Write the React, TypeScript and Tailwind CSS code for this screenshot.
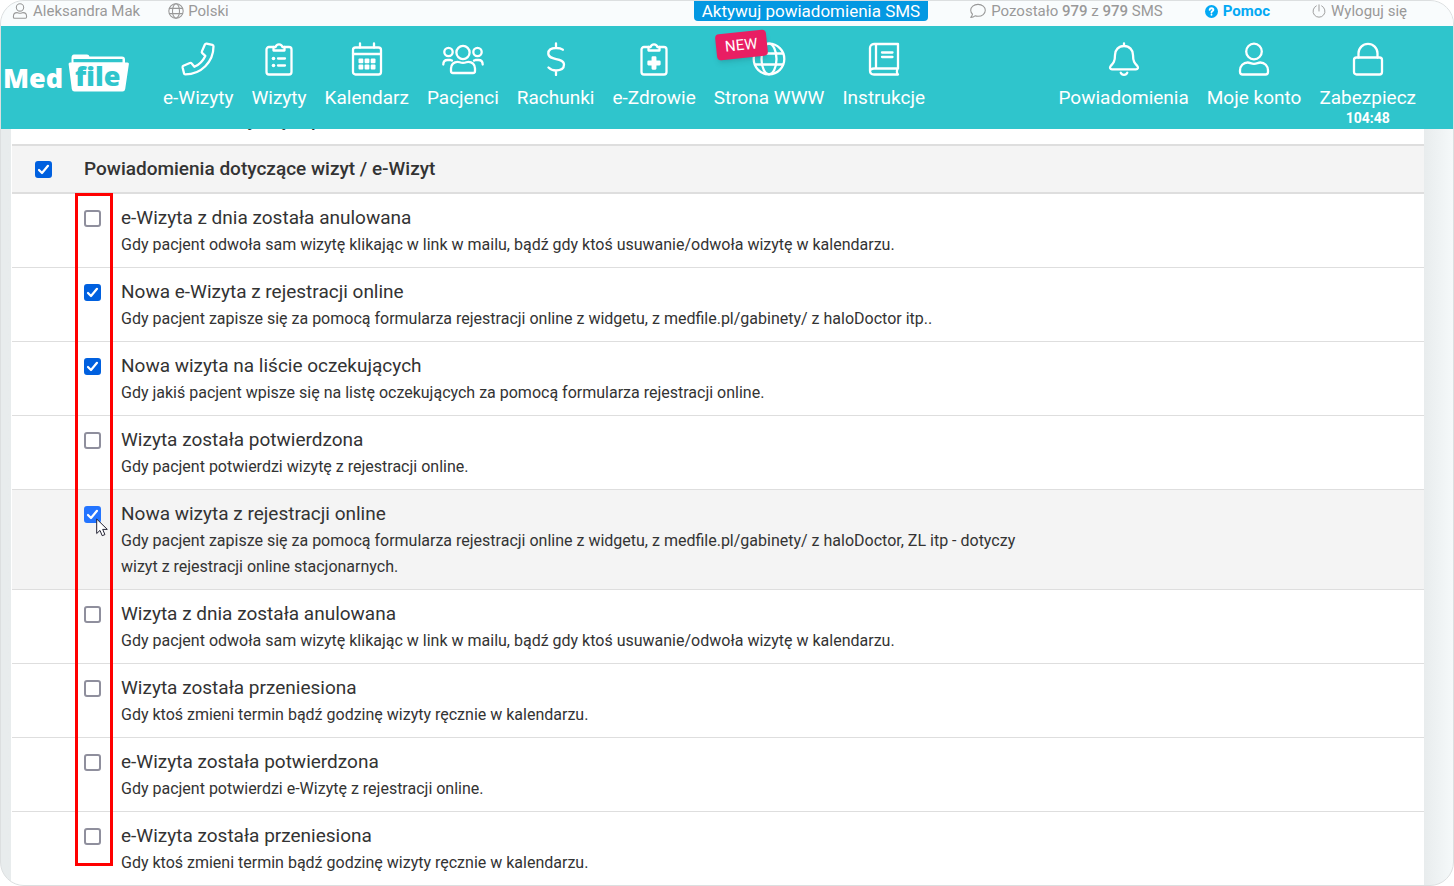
import React from "react";
import clsx from "clsx";

type IconProps = { className?: string; children: React.ReactNode; box?: string };

const Icon = ({ className = "size-[34px]", children, box = "0 0 34 34" }: IconProps) => (
  <svg
    viewBox={box}
    className={className}
    fill="none"
    stroke="currentColor"
    strokeWidth="2.3"
    strokeLinecap="round"
    strokeLinejoin="round"
    aria-hidden="true"
  >
    {children}
  </svg>
);

const PhoneIcon = () => (
  <Icon>
    <path d="M25.6 1.6 31.4 2.9C32.1 3.1 32.5 3.6 32.5 4.3 32.5 20 20 32.4 4.4 32.4 3.7 32.4 3.1 32 3 31.3L1.6 25.4C1.5 24.7 1.8 24.1 2.4 23.8L8.9 21C9.5 20.8 10.2 20.9 10.6 21.4L13.4 24.8C18.1 22.6 22.1 18.6 24.3 13.9L21.3 11.2C20.8 10.7 20.6 10 20.9 9.4L23.9 2.5C24.2 1.8 24.9 1.5 25.6 1.6Z" />
  </Icon>
);

const ClipboardIcon = () => (
  <Icon>
    <path d="M11.5 5H7A2.5 2.5 0 0 0 4.5 7.5V30A2.5 2.5 0 0 0 7 32.5H27A2.5 2.5 0 0 0 29.5 30V7.5A2.5 2.5 0 0 0 27 5H22.5" />
    <path d="M11.5 5H13.6A3.5 3.5 0 0 1 20.4 5H22.5V8.5H11.5Z" />
    <path d="M16 16.5H23M16 23.5H23" />
    <circle cx="11.5" cy="16.5" r="1.8" fill="currentColor" stroke="none" />
    <circle cx="11.5" cy="23.5" r="1.8" fill="currentColor" stroke="none" />
  </Icon>
);

const CalendarIcon = () => (
  <Icon>
    <rect x="3" y="5.5" width="28" height="27" rx="2.5" />
    <path d="M3 12H31M10 1.5V5.5M24 1.5V5.5" />
    <g fill="currentColor" stroke="none">
      <rect x="8.5" y="16.5" width="4.8" height="4.8" rx="1" />
      <rect x="14.6" y="16.5" width="4.8" height="4.8" rx="1" />
      <rect x="20.7" y="16.5" width="4.8" height="4.8" rx="1" />
      <rect x="8.5" y="22.6" width="4.8" height="4.8" rx="1" />
      <rect x="14.6" y="22.6" width="4.8" height="4.8" rx="1" />
      <rect x="20.7" y="22.6" width="4.8" height="4.8" rx="1" />
    </g>
  </Icon>
);

const UsersIcon = () => (
  <Icon className="h-[34px] w-[42px]" box="0 0 42 34">
    <circle cx="21" cy="10.5" r="6.6" />
    <circle cx="6.5" cy="10" r="4.2" />
    <circle cx="35.5" cy="10" r="4.2" />
    <path d="M9 29V26.5C9 22.5 12 19.8 15.5 19.8 17.5 19.8 18 20.8 21 20.8S24.5 19.8 26.5 19.8C30 19.8 33 22.5 33 26.5V29C33 30.4 32 31 31 31H11C10 31 9 30.4 9 29Z" />
    <path d="M1.3 22.5C1.3 19.5 3 18 5.5 18H8.5L10 18.6M40.7 22.5C40.7 19.5 39 18 36.5 18H33.5L32 18.6" />
  </Icon>
);

const DollarIcon = () => (
  <Icon>
    <path d="M17 1.5V6M17 28.5V33M23.8 7.7C22 6.3 19.7 6 17 6 12.5 6 9.3 8 9.3 11.6 9.3 19.3 25 14.8 25 22.6 25 26.6 21.7 28.5 17 28.5 13.8 28.5 11.5 27.5 9.5 25.5" />
  </Icon>
);

const HealthIcon = () => (
  <Icon>
    <path d="M11.5 5H7A2.5 2.5 0 0 0 4.5 7.5V30A2.5 2.5 0 0 0 7 32.5H27A2.5 2.5 0 0 0 29.5 30V7.5A2.5 2.5 0 0 0 27 5H22.5" />
    <path d="M11.5 5H13.6A3.5 3.5 0 0 1 20.4 5H22.5V8.5H11.5Z" />
    <path
      d="M15.7 15.5H18.3V19.7H22.5V22.3H18.3V26.5H15.7V22.3H11.5V19.7H15.7Z"
      fill="currentColor"
    />
  </Icon>
);

const GlobeIcon = ({ className }: { className?: string }) => (
  <Icon className={className}>
    <circle cx="17" cy="17" r="15.3" />
    <ellipse cx="17" cy="17" rx="7.5" ry="15.3" />
    <path d="M3 11.5H31M3 22.5H31" />
  </Icon>
);

const BookIcon = () => (
  <Icon>
    <path d="M31 2H7C4.5 2 3 3.8 3 6V28.5C3 31 4.8 32.5 7 32.5H31C29.5 31 29.5 28 31 26.5M31 2V26.5H7C4.7 26.5 3 27.5 3 29.5M9 2V26.5M15 10.5H25.5M15 15H25.5" />
  </Icon>
);

const BellIcon = () => (
  <Icon>
    <path d="M17 1.5V4M17 4C11.5 4 8 8 8 13 8 20 6 21.5 3.7 24 2.3 25.6 3.2 27.3 5 27.3H29C30.8 27.3 31.7 25.6 30.3 24 28 21.5 26 20 26 13 26 8 22.5 4 17 4ZM13.7 30.7C14.2 32 15.3 32.8 17 32.8S19.8 32 20.3 30.7" />
  </Icon>
);

const UserIcon = ({ className }: { className?: string }) => (
  <Icon className={className}>
    <circle cx="17" cy="9.5" r="7.8" />
    <path d="M3 30V28.5C3 24 6.3 20.5 10.8 20.5 13 20.5 14 21.8 17 21.8S21 20.5 23.2 20.5C27.7 20.5 31 24 31 28.5V30C31 31.7 30 32.5 28.5 32.5H5.5C4 32.5 3 31.7 3 30Z" />
  </Icon>
);

const LockIcon = () => (
  <Icon>
    <rect x="3" y="15.5" width="28" height="17" rx="2.5" />
    <path d="M7.5 15.5V11.3A9.5 9.5 0 0 1 26.5 11.3V15.5" />
  </Icon>
);

const CommentIcon = () => (
  <Icon className="size-4">
    <path d="M17 3C8 3 1.5 8.5 1.5 15.5 1.5 18.7 3 21.6 5.3 23.8 4.8 26.5 3.4 28.6 1.6 30.6 5.5 30.7 8.8 29 10.7 27.3 12.7 28 14.8 28.3 17 28.3 26 28.3 32.5 22.6 32.5 15.5S26 3 17 3Z" />
  </Icon>
);

const PowerIcon = () => (
  <Icon className="size-[14px]">
    <path d="M17 2V17M10.5 4.5A14.5 14.5 0 1 0 23.5 4.5" />
  </Icon>
);

const HelpIcon = () => (
  <Icon className="size-[13px]" box="0 0 16 16">
    <circle cx="8" cy="8" r="8" fill="currentColor" stroke="none" />
    <path d="M5.7 6C5.9 4.7 6.8 4 8 4S10.3 4.8 10.3 6C10.3 7.5 8 7.5 8 9.2M8 12V12.1" stroke="#fff" />
  </Icon>
);

const Logo = () => (
  <a href="#" aria-label="Med file" className="shrink-0">
    <svg viewBox="0 0 128 48" className="h-12 w-[128px]" fontFamily='"Open Sans", sans-serif' fontWeight="800">
      <path d="M68.5 11V6Q68.5 2.500 71 2.500H84Q86 2.500 86.500 4.500H119Q122 4.500 122 7.500V11" fill="#fff" />
      <path d="M70.500 10.500V7H119.500V10.500Z" fill="#2fc5cc" />
      <path d="M67 10.500H124.500Q126.200 10.500 125.900 12L122.200 37Q121.800 39.500 119.500 39.500H71.500Q69.200 39.500 68.800 37L65.600 12Q65.500 10.500 67 10.500Z" fill="#fff" />
      <text x="0" y="36" fontSize="27" fill="#fff">Med</text>
      <text x="72" y="34" fontSize="27" fill="#2fc5cc">file</text>
    </svg>
  </a>
);

type NavItemProps = { label: string; icon: React.ReactNode; badge?: string; note?: string };

const NavItem = ({ label, icon, badge, note }: NavItemProps) => (
  <a href="#" className="relative flex flex-col items-center whitespace-nowrap text-[19px] leading-6 text-white">
    {icon}
    <span className="mt-2.5">{label}</span>
    {note && <strong className="text-sm leading-4">{note}</strong>}
    {badge && (
      <span className="absolute -top-2.5 left-0.5 -rotate-6 rounded bg-[#e91e63] px-[9px] text-[15px] leading-[26px] shadow-md">
        {badge}
      </span>
    )}
  </a>
);

const mainNav: NavItemProps[] = [
  { label: "e-Wizyty", icon: <PhoneIcon /> },
  { label: "Wizyty", icon: <ClipboardIcon /> },
  { label: "Kalendarz", icon: <CalendarIcon /> },
  { label: "Pacjenci", icon: <UsersIcon /> },
  { label: "Rachunki", icon: <DollarIcon /> },
  { label: "e-Zdrowie", icon: <HealthIcon /> },
  { label: "Strona WWW", icon: <GlobeIcon />, badge: "NEW" },
  { label: "Instrukcje", icon: <BookIcon /> },
];

const accountNav: NavItemProps[] = [
  { label: "Powiadomienia", icon: <BellIcon /> },
  { label: "Moje konto", icon: <UserIcon /> },
  { label: "Zabezpiecz", icon: <LockIcon />, note: "104:48" },
];

type Notification = { id: string; title: string; text: string; checked?: boolean; active?: boolean };

const notifications: Notification[] = [
  {
    id: "e-cancelled",
    title: "e-Wizyta z dnia została anulowana",
    text: "Gdy pacjent odwoła sam wizytę klikając w link w mailu, bądź gdy ktoś usuwanie/odwoła wizytę w kalendarzu.",
  },
  {
    id: "e-new",
    title: "Nowa e-Wizyta z rejestracji online",
    text: "Gdy pacjent zapisze się za pomocą formularza rejestracji online z widgetu, z medfile.pl/gabinety/ z haloDoctor itp..",
    checked: true,
  },
  {
    id: "waiting",
    title: "Nowa wizyta na liście oczekujących",
    text: "Gdy jakiś pacjent wpisze się na listę oczekujących za pomocą formularza rejestracji online.",
    checked: true,
  },
  {
    id: "confirmed",
    title: "Wizyta została potwierdzona",
    text: "Gdy pacjent potwierdzi wizytę z rejestracji online.",
  },
  {
    id: "new",
    title: "Nowa wizyta z rejestracji online",
    text: "Gdy pacjent zapisze się za pomocą formularza rejestracji online z widgetu, z medfile.pl/gabinety/ z haloDoctor, ZL itp - dotyczy wizyt z rejestracji online stacjonarnych.",
    checked: true,
    active: true,
  },
  {
    id: "cancelled",
    title: "Wizyta z dnia została anulowana",
    text: "Gdy pacjent odwoła sam wizytę klikając w link w mailu, bądź gdy ktoś usuwanie/odwoła wizytę w kalendarzu.",
  },
  {
    id: "moved",
    title: "Wizyta została przeniesiona",
    text: "Gdy ktoś zmieni termin bądź godzinę wizyty ręcznie w kalendarzu.",
  },
  {
    id: "e-confirmed",
    title: "e-Wizyta została potwierdzona",
    text: "Gdy pacjent potwierdzi e-Wizytę z rejestracji online.",
  },
  {
    id: "e-moved",
    title: "e-Wizyta została przeniesiona",
    text: "Gdy ktoś zmieni termin bądź godzinę wizyty ręcznie w kalendarzu.",
  },
];

const Checkbox = ({ id, checked, active }: { id: string; checked?: boolean; active?: boolean }) => (
  <span className="relative size-[17px] shrink-0">
    <input
      type="checkbox"
      id={id}
      defaultChecked={checked}
      className={clsx(
        "peer block size-full appearance-none rounded-[3px] border-2 border-[#8f8f9d] bg-white",
        active ? "checked:border-[#2374ff] checked:bg-[#2374ff]" : "checked:border-[#0060df] checked:bg-[#0060df]"
      )}
    />
    <svg
      viewBox="0 0 17 17"
      className="pointer-events-none absolute inset-0 hidden size-full peer-checked:block"
      fill="none"
      stroke="#fff"
      strokeWidth="2.2"
      strokeLinecap="round"
      strokeLinejoin="round"
    >
      <path d="M4 9 7 12 13 4.8" />
    </svg>
    {active && (
      <svg viewBox="0 0 12 19" className="pointer-events-none absolute left-3 top-3 h-[19px] w-3">
        <path d="M.7 1V15.5L4 12.4 6.2 17.7 8.9 16.6 6.7 11.4H11.3Z" fill="#fff" stroke="#222233" />
      </svg>
    )}
  </span>
);

const TopBar = () => (
  <div className="flex h-[25px] items-start whitespace-nowrap bg-[#f9fcfd] pl-[11px] pr-[46px] text-[15px] leading-5 text-[#999]">
    <a href="#" className="flex items-center gap-[5px]">
      <UserIcon className="size-4" />
      Aleksandra Mak
    </a>
    <a href="#" className="ml-7 flex items-center gap-1">
      <GlobeIcon className="size-4" />
      Polski
    </a>
    <div className="ml-auto flex items-start gap-[42px]">
      <button type="button" className="h-5 rounded-b bg-[#0398e2] px-2 text-[17px] leading-[18px] text-white">
        Aktywuj powiadomienia SMS
      </button>
      <a href="#" className="flex items-center gap-[5px]">
        <CommentIcon />
        <span>
          Pozostało <b className="font-medium">979</b> z <b className="font-medium">979</b> SMS
        </span>
      </a>
      <a href="#" className="flex items-center gap-[5px] font-bold text-[#03a9f4]">
        <HelpIcon />
        Pomoc
      </a>
      <a href="#" className="flex items-center gap-[5px]">
        <PowerIcon />
        Wyloguj się
      </a>
    </div>
  </div>
);

const App = () => {
  return (
    <div className="min-h-screen overflow-hidden rounded-3xl border border-[#dcdfe0] bg-linear-to-r from-[#e8eced] from-98% to-[#f5f9fa] font-[Roboto,sans-serif] text-[#333]">
      <TopBar />
      <nav className="relative z-10 flex min-h-[103px] items-start bg-[#2fc5cc] pl-0.5 pr-[37px] pt-4">
        <div className="pt-2.5">
          <Logo />
        </div>
        <div className="ml-8 flex gap-[18px]">
          {mainNav.map((item) => (
            <NavItem key={item.label} {...item} />
          ))}
        </div>
        <div className="ml-auto flex gap-[18px]">
          {accountNav.map((item) => (
            <NavItem key={item.label} {...item} />
          ))}
        </div>
      </nav>

      <main className="-mt-8 ml-[10px] mr-[29px] bg-white pl-px">
        <h2 className="flex h-[47px] items-center pl-[72px] text-[19px] font-medium">
          Powiadomienia dotyczące płatności
        </h2>
        <div className="flex h-[50px] items-center gap-8 border-y-2 border-[#dedede] bg-[#f4f4f4] pl-[23px]">
          <Checkbox id="visits" checked />
          <label htmlFor="visits" className="text-[19px] font-medium">
            Powiadomienia dotyczące wizyt / e-Wizyt
          </label>
        </div>
        <div className="relative">
          <ul className="divide-y divide-[#dedede]">
            {notifications.map(({ id, title, text, checked, active }) => (
              <li key={id} className={clsx("flex gap-5 pb-[9px] pl-[72px] pt-[10px]", active && "bg-[#f4f4f4]")}>
                <div className="flex h-7 items-center">
                  <Checkbox id={id} checked={checked} active={active} />
                </div>
                <label htmlFor={id} className="max-w-[920px]">
                  <span className="block text-[19px] leading-7">{title}</span>
                  <span className="block text-base leading-[26px]">{text}</span>
                </label>
              </li>
            ))}
          </ul>
          <div className="pointer-events-none absolute -top-px bottom-[19px] left-[63px] w-[38px] border-3 border-[#ff0000]" />
        </div>
      </main>
    </div>
  );
};

export default App;
